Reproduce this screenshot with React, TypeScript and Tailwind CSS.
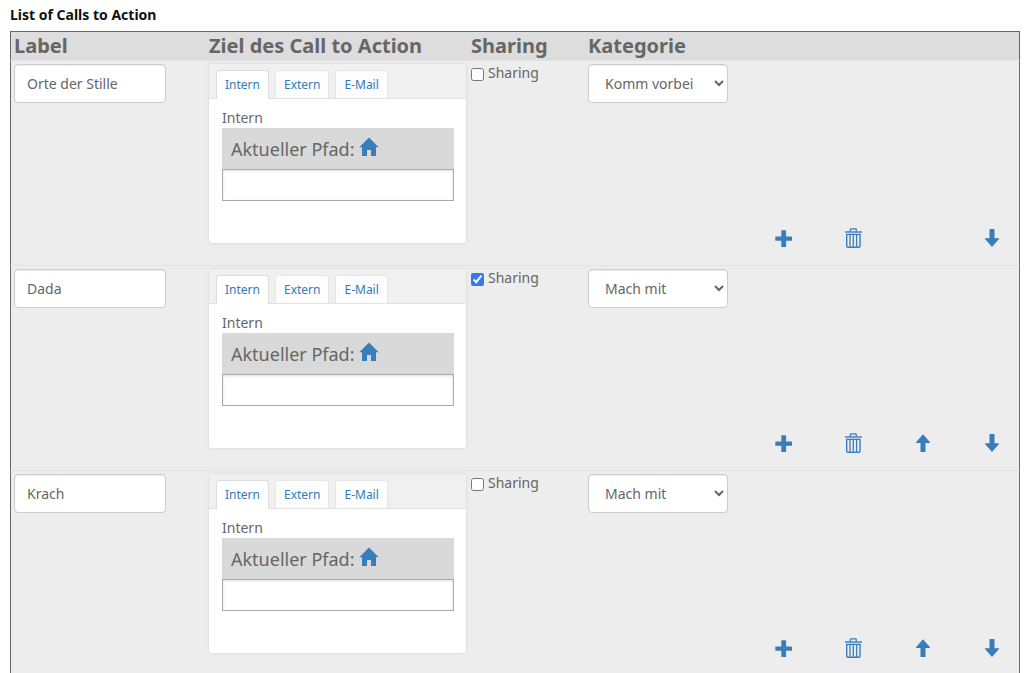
import { useState } from 'react';

type Entry = { id: string; label: string; sharing: boolean; category: string };

const entries: Entry[] = [
  { id: 'orte', label: 'Orte der Stille', sharing: false, category: 'Komm vorbei' },
  { id: 'dada', label: 'Dada', sharing: true, category: 'Mach mit' },
  { id: 'krach', label: 'Krach', sharing: false, category: 'Mach mit' },
];

const categories = ['Komm vorbei', 'Mach mit'];
const tabs = ['Intern', 'Extern', 'E-Mail'];

function HomeIcon() {
  return (
    <svg width="20" height="20" viewBox="0 0 20 20" fill="currentColor" aria-hidden="true">
      <path d="M10 0.5 L19.7 10.2 H17 V19 H12 V13 H8 V19 H3 V10.2 H0.3 Z" />
    </svg>
  );
}

function PlusIcon() {
  return (
    <svg width="18" height="20" viewBox="0 0 18 20" fill="currentColor" aria-hidden="true">
      <path d="M6.8 2.2 h3.8 q.5 0 .5.5 V8.5 h5.4 q.5 0 .5.5 v3.3 q0 .5-.5.5 H11.1 v5.7 q0 .5-.5.5 H6.8 q-.5 0-.5-.5 V12.8 H.8 q-.5 0-.5-.5 V9 q0-.5.5-.5 H6.3 V2.7 q0-.5.5-.5z" />
    </svg>
  );
}

function TrashIcon() {
  return (
    <svg width="18" height="20" viewBox="-1 0 18 20" fill="none" stroke="currentColor" aria-hidden="true">
      <path d="M0 4 H17" strokeWidth="1.4" />
      <path d="M5.3 3.6 V1.6 Q5.3 .8 6.2 .8 H10.4 Q11.3 .8 11.3 1.6 V3.6" strokeWidth="1.3" />
      <path d="M1.7 6.4 H15 V18 Q15 19.2 13.9 19.2 H2.8 Q1.7 19.2 1.7 18 Z" strokeWidth="1.4" />
      <path d="M5 7 V18.7 M8.3 7 V18.7 M11.6 7 V18.7" strokeWidth="1.3" />
    </svg>
  );
}

function ArrowIcon({ up = false }: { up?: boolean }) {
  return (
    <svg width="18" height="20" viewBox="0 0 18 20" fill="currentColor" aria-hidden="true">
      <path
        d={
          up
            ? 'M9 1.3 L16 9.2 Q16.4 10 15.5 10 H11.5 V18.4 Q11.5 19 10.9 19 H7.1 Q6.5 19 6.5 18.4 V10 H2.5 Q1.6 10 2 9.2 Z'
            : 'M9 19 L2 11.1 Q1.6 10.3 2.5 10.3 H6.5 V1.6 Q6.5 1 7.1 1 H10.9 Q11.5 1 11.5 1.6 V10.3 H15.5 Q16.4 10.3 16 11.1 Z'
        }
      />
    </svg>
  );
}

function TargetCard({ id }: { id: string }) {
  const [active, setActive] = useState('Intern');
  return (
    <div className="min-h-[179px] rounded-[3px] bg-white shadow-[0_0_3px_rgba(0,0,0,0.12)]">
      <div className="flex gap-1.5 rounded-t-[3px] border-b border-[#e2e2e2] bg-[#f0f0f0] px-[7px] pt-1.5" role="tablist">
        {tabs.map((tab) => (
          <button
            key={tab}
            type="button"
            role="tab"
            aria-selected={tab === active}
            onClick={() => setActive(tab)}
            className={
              'rounded-t-[3px] border border-b-0 px-2 text-xs leading-[27px] text-[#337ab7] ' +
              (tab === active ? '-mb-px border-[#ddd] bg-white pb-px' : 'border-[#e6e6e6] bg-[#fdfdfd]')
            }
          >
            {tab}
          </button>
        ))}
      </div>
      <div className="pt-[9px] pr-3 pl-[13px]">
        <label htmlFor={`path-${id}`} className="block leading-5">
          {active}
        </label>
        <div className="flex h-[41px] items-center gap-1 bg-[#d9d9d9] px-[9px] text-lg">
          <span>Aktueller Pfad:</span>
          <a href="#" aria-label="Startseite" className="pb-1 text-[#3a7dbb]">
            <HomeIcon />
          </a>
        </div>
        <input
          id={`path-${id}`}
          type="text"
          className="block h-8 w-full border border-[#aaa] bg-white px-2 shadow-[inset_0_1px_3px_rgba(0,0,0,0.12)] outline-none"
        />
      </div>
    </div>
  );
}

function Row({ entry, first }: { entry: Entry; first: boolean }) {
  const cell = 'border-t border-[#e2e2e2] pl-[3px] pt-[3px] align-top';
  return (
    <tr className="h-[205px] bg-[#ededed]">
      <td className={cell + ' border-l border-l-[#666]'}>
        <input
          type="text"
          aria-label="Label"
          defaultValue={entry.label}
          className="block h-[39px] w-[152px] rounded-[4px] border border-[#ccc] bg-white px-3 shadow-[inset_0_1px_1px_rgba(0,0,0,0.075)] outline-none"
        />
      </td>
      <td className={cell + ' pr-0.5'}>
        <TargetCard id={entry.id} />
      </td>
      <td className={cell}>
        <label className="flex items-center gap-1 leading-[18px]">
          <input type="checkbox" defaultChecked={entry.sharing} className="mt-0.5 size-[13px] accent-[#3478f6]" />
          Sharing
        </label>
      </td>
      <td className={cell}>
        <select
          aria-label="Kategorie"
          defaultValue={entry.category}
          className="block h-[39px] w-[140px] rounded-[4px] border border-[#ccc] bg-white pl-3 shadow-[inset_0_1px_1px_rgba(0,0,0,0.075)] outline-none"
        >
          {categories.map((c) => (
            <option key={c}>{c}</option>
          ))}
        </select>
      </td>
      <td className="border-t border-r border-[#e2e2e2] border-r-[#666] pr-[18px] pb-[17px] align-bottom">
        <div className="flex justify-between text-[#3a7dbb]">
          <button type="button" aria-label="Hinzufügen">
            <PlusIcon />
          </button>
          <button type="button" aria-label="Löschen">
            <TrashIcon />
          </button>
          {first ? (
            <span className="w-[18px]" />
          ) : (
            <button type="button" aria-label="Nach oben">
              <ArrowIcon up />
            </button>
          )}
          <button type="button" aria-label="Nach unten">
            <ArrowIcon />
          </button>
        </div>
      </td>
    </tr>
  );
}

export default function App() {
  const head = 'border-t border-[#666] px-[3px] text-left font-bold';
  return (
    <main className="h-screen overflow-hidden bg-white px-2.5 pt-[5px] font-['Noto_Sans',sans-serif] text-sm text-[#666]">
      <h1 className="mb-1.5 leading-5 font-bold text-[#111]">List of Calls to Action</h1>
      <table className="w-full table-fixed border-separate border-spacing-0">
        <colgroup>
          <col className="w-[196px]" />
          <col className="w-[262px]" />
          <col className="w-[117px]" />
          <col className="w-[190px]" />
          <col />
        </colgroup>
        <thead>
          <tr className="bg-[#ddd] text-xl leading-7">
            <th className={head + ' border-l'}>Label</th>
            <th className={head}>Ziel des Call to Action</th>
            <th className={head}>Sharing</th>
            <th className={head}>Kategorie</th>
            <th className={head + ' border-r'} aria-label="Aktionen" />
          </tr>
        </thead>
        <tbody>
          {entries.map((entry, i) => (
            <Row key={entry.id} entry={entry} first={i === 0} />
          ))}
        </tbody>
      </table>
    </main>
  );
}
